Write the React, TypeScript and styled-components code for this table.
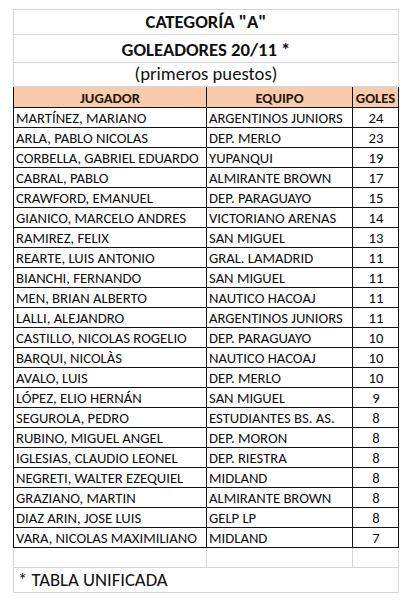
import React from 'react';
import styled, { createGlobalStyle } from 'styled-components';

type Scorer = {
  name: string;
  team: string;
  goals: number;
};

const scorers: Scorer[] = [
  { name: 'MARTÍNEZ, MARIANO', team: 'ARGENTINOS JUNIORS', goals: 24 },
  { name: 'ARLA, PABLO NICOLAS', team: 'DEP. MERLO', goals: 23 },
  { name: 'CORBELLA, GABRIEL EDUARDO', team: 'YUPANQUI', goals: 19 },
  { name: 'CABRAL, PABLO', team: 'ALMIRANTE BROWN', goals: 17 },
  { name: 'CRAWFORD, EMANUEL', team: 'DEP. PARAGUAYO', goals: 15 },
  { name: 'GIANICO, MARCELO ANDRES', team: 'VICTORIANO ARENAS', goals: 14 },
  { name: 'RAMIREZ, FELIX', team: 'SAN MIGUEL', goals: 13 },
  { name: 'REARTE, LUIS ANTONIO', team: 'GRAL. LAMADRID', goals: 11 },
  { name: 'BIANCHI, FERNANDO', team: 'SAN MIGUEL', goals: 11 },
  { name: 'MEN, BRIAN ALBERTO', team: 'NAUTICO HACOAJ', goals: 11 },
  { name: 'LALLI, ALEJANDRO', team: 'ARGENTINOS JUNIORS', goals: 11 },
  { name: 'CASTILLO, NICOLAS ROGELIO', team: 'DEP. PARAGUAYO', goals: 10 },
  { name: 'BARQUI, NICOLÀS', team: 'NAUTICO HACOAJ', goals: 10 },
  { name: 'AVALO, LUIS', team: 'DEP. MERLO', goals: 10 },
  { name: 'LÓPEZ, ELIO  HERNÁN', team: 'SAN MIGUEL', goals: 9 },
  { name: 'SEGUROLA, PEDRO', team: 'ESTUDIANTES BS. AS.', goals: 8 },
  { name: 'RUBINO, MIGUEL ANGEL', team: 'DEP. MORON', goals: 8 },
  { name: 'IGLESIAS, CLAUDIO LEONEL', team: 'DEP. RIESTRA', goals: 8 },
  { name: 'NEGRETI, WALTER EZEQUIEL', team: 'MIDLAND', goals: 8 },
  { name: 'GRAZIANO, MARTIN', team: 'ALMIRANTE BROWN', goals: 8 },
  { name: 'DIAZ ARIN, JOSE LUIS', team: 'GELP LP', goals: 8 },
  { name: 'VARA, NICOLAS MAXIMILIANO', team: 'MIDLAND', goals: 7 },
];

const GlobalStyle = createGlobalStyle`
  body {
    margin: 0;
    background: #ffffff;
    font-family: Carlito, Lato, sans-serif;
    color: #111;
  }
`;

const Page = styled.div`
  padding: 9px 0 0 13px;
`;

const Sheet = styled.table`
  border-collapse: collapse;
  table-layout: fixed;
  width: 385px;
  font-family: Carlito, Lato, sans-serif;
`;

const TitleCell = styled.td<{ $height: number; $bold?: boolean }>`
  height: ${p => p.$height}px;
  padding: 0 0 1px;
  border: 1px solid #d6d6d6;
  text-align: center;
  vertical-align: bottom;
  font-size: 18.67px;
  line-height: 22px;
  font-weight: ${p => (p.$bold ? 700 : 400)};
  color: #111;
`;

const HeadCell = styled.th`
  height: 20px;
  padding: 0;
  background: #f8cbad;
  border: 1px solid #111;
  font-size: 14.67px;
  line-height: 18px;
  font-weight: 700;
  color: #24160e;
  text-align: center;
  vertical-align: bottom;
`;

const Cell = styled.td<{ $center?: boolean }>`
  height: 19px;
  padding: 0 1px 0 2px;
  border: 1px solid #111;
  font-size: 14.67px;
  line-height: 18px;
  white-space: nowrap;
  overflow: hidden;
  text-align: ${p => (p.$center ? 'center' : 'left')};
  vertical-align: bottom;
  color: #0d0d0d;
`;

const BlankCell = styled.td`
  height: 19px;
  padding: 0;
  border: 1px solid #d6d6d6;
  border-top-color: #111;
`;

const NoteCell = styled.td`
  height: 23px;
  padding: 0 0 1px 4px;
  border: 1px solid #d6d6d6;
  font-size: 18.67px;
  line-height: 22px;
  text-align: left;
  vertical-align: bottom;
  color: #111;
`;

const App: React.FC = () => (
  <>
    <GlobalStyle />
    <Page>
      <Sheet>
        <colgroup>
          <col style={{ width: 193 }} />
          <col style={{ width: 146 }} />
          <col style={{ width: 46 }} />
        </colgroup>
        <tbody>
          <tr>
            <TitleCell colSpan={3} $height={23} $bold>CATEGORÍA "A"</TitleCell>
          </tr>
          <tr>
            <TitleCell colSpan={3} $height={26} $bold>GOLEADORES 20/11 *</TitleCell>
          </tr>
          <tr>
            <TitleCell colSpan={3} $height={22}>(primeros puestos)</TitleCell>
          </tr>
          <tr>
            <HeadCell>JUGADOR</HeadCell>
            <HeadCell>EQUIPO</HeadCell>
            <HeadCell>GOLES</HeadCell>
          </tr>
          {scorers.map((s) => (
            <tr key={s.name}>
              <Cell>{s.name}</Cell>
              <Cell>{s.team}</Cell>
              <Cell $center>{s.goals}</Cell>
            </tr>
          ))}
          <tr>
            <BlankCell />
            <BlankCell />
            <BlankCell />
          </tr>
          <tr>
            <NoteCell colSpan={3}>* TABLA UNIFICADA</NoteCell>
          </tr>
        </tbody>
      </Sheet>
    </Page>
  </>
);

export default App;
